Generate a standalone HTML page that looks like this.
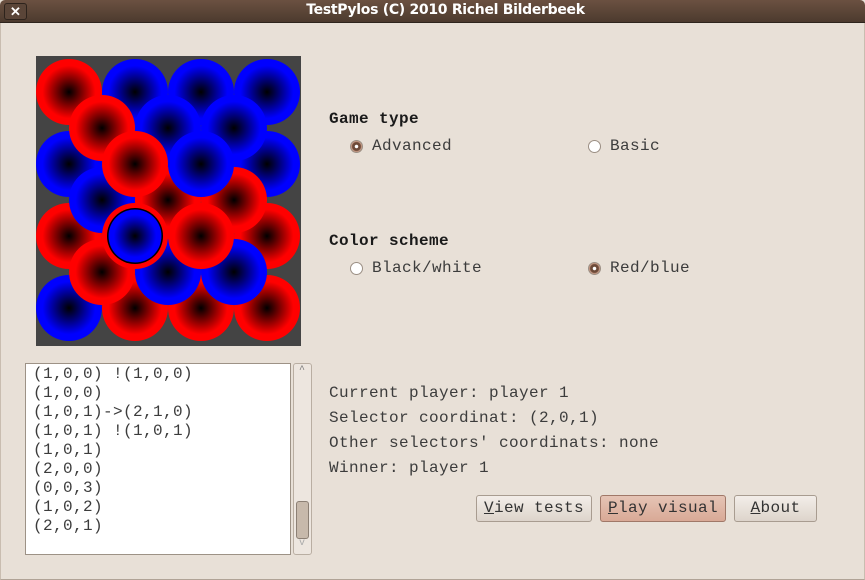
<!DOCTYPE html>
<html><head><meta charset="utf-8"><style>
*{margin:0;padding:0;box-sizing:border-box}
body{width:865px;height:580px;overflow:hidden;background:#e8e0d7;font-family:"Liberation Mono",monospace;font-size:16px;color:#3c3c3c;position:relative;letter-spacing:0.4px}
.title{position:absolute;left:0;top:0;width:865px;height:23px;background:linear-gradient(#6b5141,#4c3a2e);border-radius:5px 5px 0 0;border-bottom:1px solid #2e241d}
.title span{position:absolute;left:26px;right:0;top:2px;text-align:center;color:#fff;font:bold 14px "DejaVu Sans",sans-serif;letter-spacing:-0.3px}
.xb{position:absolute;left:4px;top:3px;width:23px;height:17px;border:1px solid #2d231c;border-radius:3px;background:#5a4538;color:#fff;font:bold 13px "Liberation Sans",sans-serif;text-align:center;line-height:15px;letter-spacing:0}
.win{position:absolute;left:0;top:23px;width:865px;height:557px;border-left:1px solid #c9bdb0;border-right:1px solid #c9bdb0;border-bottom:1px solid #b0a396}
.t{position:absolute;white-space:pre}
.b{font-weight:bold;color:#1a1a1a}
.r{position:absolute;width:13px;height:13px;border-radius:50%;border:1px solid #9b8f84;background:#fff}
.r.on{background:radial-gradient(circle,#fff 0 1.5px,#6d4a38 2px 4px,#c89a85 5px)}
.list{position:absolute;left:25px;top:363px;width:266px;height:192px;background:#fff;border:1px solid #9d9286;padding-top:1px}
.list div{height:19px;line-height:19px;padding-left:7px;white-space:pre}
.sb{position:absolute;left:293px;top:363px;width:19px;height:192px;border:1px solid #b9aea2;border-radius:3px;background:#ede6df}
.thumb{position:absolute;left:2px;top:137px;width:13px;height:38px;border:1px solid #8c8075;border-radius:3px;background:#c7b9ab}
.btn{position:absolute;top:495px;height:27px;border:1px solid #a89c90;border-radius:3px;background:linear-gradient(#f3eee9,#ddd4cb);text-align:center;line-height:25px;color:#333}
.btn.hi{background:linear-gradient(#e5c4b5,#d9a996);border-color:#a07868}
u{text-decoration:underline}
</style></head><body>
<div class="title"><div class="xb">✕</div><span>TestPylos (C) 2010 Richel Bilderbeek</span></div>
<div class="win"></div>
<svg style="position:absolute;left:36px;top:56px" width="265" height="290" viewBox="36 56 265 290">
<defs>
<radialGradient id="R"><stop offset="0" stop-color="#000"/><stop offset="0.8" stop-color="#f00"/><stop offset="1" stop-color="#f00"/></radialGradient>
<radialGradient id="B"><stop offset="0" stop-color="#000"/><stop offset="0.8" stop-color="#00f"/><stop offset="1" stop-color="#00f"/></radialGradient>
</defs>
<rect x="36" y="56" width="265" height="290" fill="#444"/>
<g>
<circle cx="69" cy="92" r="33" fill="url(#R)"/><circle cx="135" cy="92" r="33" fill="url(#B)"/><circle cx="201" cy="92" r="33" fill="url(#B)"/><circle cx="267" cy="92" r="33" fill="url(#B)"/>
<circle cx="69" cy="164" r="33" fill="url(#B)"/><circle cx="135" cy="164" r="33" fill="url(#B)"/><circle cx="201" cy="164" r="33" fill="url(#B)"/><circle cx="267" cy="164" r="33" fill="url(#B)"/>
<circle cx="69" cy="236" r="33" fill="url(#R)"/><circle cx="135" cy="236" r="33" fill="url(#R)"/><circle cx="201" cy="236" r="33" fill="url(#R)"/><circle cx="267" cy="236" r="33" fill="url(#R)"/>
<circle cx="69" cy="308" r="33" fill="url(#B)"/><circle cx="135" cy="308" r="33" fill="url(#R)"/><circle cx="201" cy="308" r="33" fill="url(#R)"/><circle cx="267" cy="308" r="33" fill="url(#R)"/>
</g>
<g>
<circle cx="102" cy="128" r="33" fill="url(#R)"/><circle cx="168" cy="128" r="33" fill="url(#B)"/><circle cx="234" cy="128" r="33" fill="url(#B)"/>
<circle cx="102" cy="200" r="33" fill="url(#B)"/><circle cx="168" cy="200" r="33" fill="url(#R)"/><circle cx="234" cy="200" r="33" fill="url(#R)"/>
<circle cx="102" cy="272" r="33" fill="url(#R)"/><circle cx="168" cy="272" r="33" fill="url(#B)"/><circle cx="234" cy="272" r="33" fill="url(#B)"/>
</g>
<g>
<circle cx="135" cy="164" r="33" fill="url(#R)"/><circle cx="201" cy="164" r="33" fill="url(#B)"/>
<circle cx="135" cy="236" r="33" fill="url(#R)"/><circle cx="201" cy="236" r="33" fill="url(#R)"/>
<circle cx="135" cy="236" r="28" fill="#000"/>
<circle cx="135" cy="236" r="26.5" fill="url(#B)"/>
</g>
</svg>
<div class="t b" style="left:329px;top:110px">Game type</div>
<div class="r on" style="left:350px;top:140px"></div><div class="t" style="left:372px;top:137px">Advanced</div>
<div class="r" style="left:588px;top:140px"></div><div class="t" style="left:610px;top:137px">Basic</div>
<div class="t b" style="left:329px;top:232px">Color scheme</div>
<div class="r" style="left:350px;top:262px"></div><div class="t" style="left:372px;top:259px">Black/white</div>
<div class="r on" style="left:588px;top:262px"></div><div class="t" style="left:610px;top:259px">Red/blue</div>
<div class="list">
<div>(1,0,0) !(1,0,0)</div><div>(1,0,0)</div><div>(1,0,1)-&gt;(2,1,0)</div><div>(1,0,1) !(1,0,1)</div><div>(1,0,1)</div><div>(2,0,0)</div><div>(0,0,3)</div><div>(1,0,2)</div><div>(2,0,1)</div>
</div>
<div class="sb"><div style="position:absolute;left:5px;top:1px;font-size:10px;color:#777">^</div><div class="thumb"></div><div style="position:absolute;left:5px;top:174px;font-size:10px;color:#aaa">v</div></div>
<div class="t" style="left:329px;top:384px">Current player: player 1</div>
<div class="t" style="left:329px;top:409px">Selector coordinat: (2,0,1)</div>
<div class="t" style="left:329px;top:434px">Other selectors' coordinats: none</div>
<div class="t" style="left:329px;top:459px">Winner: player 1</div>
<div class="btn" style="left:476px;width:116px"><u>V</u>iew tests</div>
<div class="btn hi" style="left:600px;width:126px"><u>P</u>lay visual</div>
<div class="btn" style="left:734px;width:83px"><u>A</u>bout</div>
</body></html>
